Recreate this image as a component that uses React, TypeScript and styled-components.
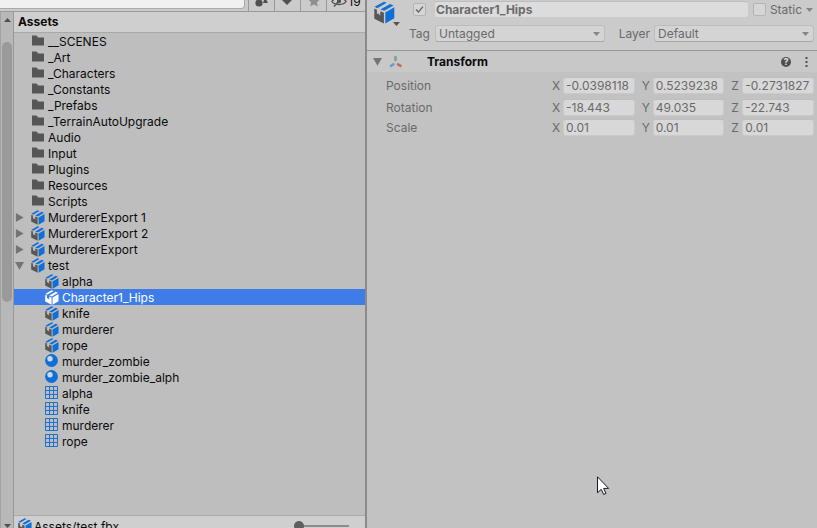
import React from "react";
import styled, { createGlobalStyle, css } from "styled-components";

const GlobalStyle = createGlobalStyle`
  *, *::before, *::after { box-sizing: border-box; }
  body {
    margin: 0;
    overflow: hidden;
    background: #c2c2c2;
    color: #0a0a0a;
    font: 12px/16px Inter, sans-serif;
  }
  button, input, select { font: inherit; color: inherit; margin: 0; }
  button { border: 0; padding: 0; background: none; }
  svg { display: block; flex: none; }
`;

/* ---------- icons ---------- */

const FolderIcon = () => (
  <svg width="14" height="14" viewBox="0 0 14 14" aria-hidden="true">
    <path d="M1 1.500h4.600l1.400 2h6v8H1z" fill="#565656" />
  </svg>
);

const PrefabIcon = ({ large, plain }: { large?: boolean; plain?: boolean }) => {
  const blue = plain ? "#fff" : "#0f6fd8";
  const dark = plain ? "#fff" : "#565656";
  return (
    <svg width={large ? 21 : 14} height={large ? 23 : 15} viewBox="0 0 21 22.500" aria-hidden="true">
      <path d="M.6 5.600 10 .4l2.700 1L3.200 7zM6.400 8.200 16 2.700l3.500 1.500L10.300 9.600z" fill={blue} />
      <path d="M11.300 11.200 20.300 6v11L11.300 22.200z" fill={blue} />
      <path d="M.3 7.200l2.600 1.200v4.400l1.500-.6 1.900 2.400V9.900l3.600 1.500v10.800L.3 17.400z" fill={dark} />
    </svg>
  );
};

const MaterialIcon = () => (
  <svg width="14" height="14" viewBox="0 0 14 14" aria-hidden="true">
    <circle cx="6.5" cy="6.5" r="6.4" fill="#0f6fd8" />
    <circle cx="5" cy="4.8" r="2.7" fill="#d3d8de" />
  </svg>
);

const MeshIcon = () => (
  <svg width="14" height="14" viewBox="0 0 14 14" aria-hidden="true">
    <path
      d="M.5.5h12v12H.5zM4.5.5v12M8.5.5v12M.5 4.5h12M.5 8.5h12"
      fill="none"
      stroke="#1c70d0"
    />
  </svg>
);

const Arrow = ({ open }: { open?: boolean }) => (
  <svg width="9" height="9" viewBox="0 0 10 10" aria-hidden="true">
    <path d={open ? "M0 1h10L5 9.6z" : "M1 0v10l8.6-5z"} fill="#747474" />
  </svg>
);

const Caret = ({ color = "#858585", up }: { color?: string; up?: boolean }) => (
  <svg width="7" height="4" viewBox="0 0 7 4" aria-hidden="true">
    <path d={up ? "M0 4h7L3.500 0z" : "M0 0h7L3.500 4z"} fill={color} />
  </svg>
);

const AxesIcon = () => (
  <svg width="14" height="14" viewBox="0 0 14 14" aria-hidden="true">
    <g strokeWidth="2.6" strokeLinecap="round">
      <path d="M6.500 2v3" stroke="#7ba779" />
      <path d="M4.400 9.400 2 10.800" stroke="#6a9dd2" />
      <path d="M9 9.400 11.500 10.800" stroke="#cb6464" />
    </g>
  </svg>
);

/* ---------- frame ---------- */

const Editor = styled.div`
  display: flex;
  height: 100vh;
  overflow: hidden;
`;

const ProjectPanel = styled.section`
  display: flex;
  flex-direction: column;
  flex: 0 0 367px;
  border-right: 2px solid #8a8a8a;
  background: #bebebe;
`;

const ToolbarClip = styled.div`
  display: flex;
  align-items: flex-end;
  flex: 0 0 12px;
  overflow: hidden;
  border-bottom: 1px solid #999;
  background: #cbcbcb;
`;

const SearchBox = styled.input`
  flex: 1;
  min-width: 0;
  height: 18px;
  margin: 0 3px 2px 0;
  border: 1px solid #aaa;
  border-left: 0;
  border-radius: 0 0 4px 0;
  background: #f0f0f0;
`;

const ToolButton = styled.button<{ $wide?: boolean }>`
  display: flex;
  align-items: center;
  justify-content: center;
  gap: 1px;
  width: ${(p) => (p.$wide ? 39 : 26)}px;
  height: 20px;
  border-left: 1px solid #999;
`;

const PanelBody = styled.div`
  display: flex;
  flex: 1;
  min-height: 0;
`;

const ScrollTrack = styled.div`
  display: flex;
  flex-direction: column;
  align-items: center;
  flex: 0 0 14px;
  padding-top: 6px;
  overflow: hidden;
  border-left: 1px solid #a3a3a3;
  border-right: 1px solid #999;
  background: #b8b8b8;
`;

const ScrollThumb = styled.div`
  flex: 0 1 260px;
  width: 10px;
  margin: 20px 0 auto;
  border-radius: 5px;
  background: #9a9a9a;
`;

const ListColumn = styled.div`
  display: flex;
  flex-direction: column;
  flex: 1;
  min-width: 0;
`;

const ListHeader = styled.h2`
  margin: 0;
  padding: 2px 4px;
  border-bottom: 1px solid #a9a9a9;
  background: #cfcfcf;
  font-size: 12px;
  line-height: 16px;
  font-weight: 700;
`;

const Tree = styled.ul`
  flex: 1;
  min-height: 0;
  margin: 0;
  padding: 0;
  overflow: hidden;
  list-style: none;
`;

const TreeRow = styled.li<{ $nested?: boolean; $selected?: boolean }>`
  display: flex;
  align-items: center;
  gap: 3px;
  height: 16px;
  padding-left: ${(p) => (p.$nested ? 15 : 1)}px;
  white-space: nowrap;
  ${(p) =>
    p.$selected &&
    css`
      background: #3e7de7;
      color: #fff;
    `}
`;

const Toggle = styled.button`
  display: flex;
  width: 13px;
`;

const RowText = styled.span`
  padding-top: 1px;
  line-height: 15px;
`;

const StatusBar = styled.footer`
  display: flex;
  align-items: flex-start;
  flex: 0 0 13px;
  gap: 2px;
  overflow: hidden;
  padding: 2px 16px 0 4px;
  border-top: 1px solid #a9a9a9;
  background: #cfcfcf;
`;

const ZoomSlider = styled.input`
  appearance: none;
  width: 55px;
  height: 15px;
  margin-left: auto;
  background: linear-gradient(#8c8c8c, #8c8c8c) center / 100% 2px no-repeat;
  &::-webkit-slider-thumb {
    appearance: none;
    width: 10px;
    height: 10px;
    border-radius: 50%;
    background: #5f5f5f;
  }
`;

/* ---------- inspector ---------- */

const Inspector = styled.section`
  flex: 1;
  min-width: 0;
  background: #c2c2c2;
  color: #6a6a6a;
`;

const ObjectHeader = styled.header`
  display: flex;
  height: 51px;
  padding: 1px 3px 0 7px;
  border-bottom: 1px solid #979797;
  background: #cbcbcb;
`;

const ObjectIcon = styled.button`
  display: flex;
  align-items: flex-end;
  width: 27px;
  height: 25px;
  svg:first-child { align-self: flex-start; }
  svg:last-child { margin-left: -2px; }
`;

const ObjectFields = styled.div`
  flex: 1;
  min-width: 0;
  display: flex;
  flex-direction: column;
  gap: 7px;
`;

const NameLine = styled.div`
  display: flex;
  align-items: center;
  gap: 4px;
  height: 17px;
  padding: 0 1px 0 12px;
`;

const Check = styled.input`
  appearance: none;
  flex: none;
  width: 13px;
  height: 13px;
  border: 1px solid #b4b4b4;
  border-radius: 2px;
  background: #d6d6d6;
  &:checked {
    background: #d6d6d6
      url("data:image/svg+xml,%3Csvg xmlns='http://www.w3.org/2000/svg' viewBox='0 0 11 11'%3E%3Cpath d='M2 5.6 4.4 8 9 2.6' fill='none' stroke='%23666' stroke-width='1.4'/%3E%3C/svg%3E");
  }
`;

const Field = styled.input`
  width: 100%;
  min-width: 0;
  height: 17px;
  padding: 0 2px;
  border: 1px solid #cacaca;
  border-top-color: #bebebe;
  border-radius: 3px;
  background: #d8d8d8;
  line-height: 15px;
  outline: 0;
`;

const NameField = styled(Field)`
  flex: 1;
  margin-left: 4px;
  padding: 0 1px;
  background: #dcdcdc;
  font-weight: 700;
`;

const StaticButton = styled.button`
  display: flex;
`;

const TagLine = styled.div`
  display: grid;
  grid-template-columns: 26px minmax(0, 17fr) 49px minmax(0, 16fr);
  align-items: center;
  padding-left: 8px;
`;

const FieldLabel = styled.label<{ $end?: boolean }>`
  padding-top: 1px;
  line-height: 16px;
  white-space: nowrap;
  justify-self: ${(p) => (p.$end ? "end" : "start")};
  padding-right: ${(p) => (p.$end ? 4 : 0)}px;
`;

const SelectBox = styled.span`
  display: grid;
  align-items: center;
  svg { grid-area: 1 / 1; justify-self: end; margin-right: 5px; pointer-events: none; }
`;

const Select = styled.select`
  appearance: none;
  grid-area: 1 / 1;
  width: 100%;
  height: 17px;
  padding: 0 3px;
  border: 1px solid #bdbdbd;
  border-bottom-color: #a8a8a8;
  border-radius: 3px;
  background: #d4d4d4;
  line-height: 15px;
`;

const ComponentHeader = styled.div`
  display: flex;
  align-items: center;
  height: 21px;
  padding: 0 1px 0 6px;
  background: #c8c8c8;
`;

const ComponentToggle = styled(Toggle)`
  width: 16px;
`;

const ComponentTitle = styled.h3`
  flex: 1;
  margin: 0 0 0 24px;
  color: #0a0a0a;
  font-size: 12px;
  line-height: 16px;
  font-weight: 700;
`;

const HeaderButton = styled.button`
  display: flex;
  justify-content: center;
  width: 20px;
`;

const HelpBadge = styled.span`
  display: flex;
  align-items: center;
  justify-content: center;
  width: 10px;
  height: 10px;
  border-radius: 50%;
  background: #4f4f4f;
  color: #d8d8d8;
  font-size: 9px;
  line-height: 10px;
  font-weight: 800;
`;

const Properties = styled.div`
  display: grid;
  padding: 5px 3px 0 19px;
`;

const VectorRow = styled.div<{ $tight?: boolean }>`
  display: grid;
  grid-template-columns: 166px minmax(0, 1fr);
  align-items: center;
  height: ${(p) => (p.$tight ? 20 : 22)}px;
  padding-bottom: ${(p) => (p.$tight ? 3 : 5)}px;
`;

const Axes = styled.div`
  display: grid;
  grid-template-columns: repeat(3, minmax(0, 1fr));
  gap: 7px;
`;

const Axis = styled.label`
  display: grid;
  grid-template-columns: 11px minmax(0, 1fr);
  align-items: center;
`;

const Pointer = styled.svg`
  position: absolute;
  left: 597px;
  top: 476px;
`;

/* ---------- content ---------- */

type Kind = "folder" | "prefab" | "material" | "mesh";
type Item = { name: string; kind: Kind; nested?: boolean; open?: boolean; toggle?: boolean; selected?: boolean };

const folders = [
  "__SCENES", "_Art", "_Characters", "_Constants", "_Prefabs", "_TerrainAutoUpgrade",
  "Audio", "Input", "Plugins", "Resources", "Scripts",
];

const items: Item[] = [
  ...folders.map((name): Item => ({ name, kind: "folder" })),
  { name: "MurdererExport 1", kind: "prefab", toggle: true },
  { name: "MurdererExport 2", kind: "prefab", toggle: true },
  { name: "MurdererExport", kind: "prefab", toggle: true },
  { name: "test", kind: "prefab", toggle: true, open: true },
  { name: "alpha", kind: "prefab", nested: true },
  { name: "Character1_Hips", kind: "prefab", nested: true, selected: true },
  { name: "knife", kind: "prefab", nested: true },
  { name: "murderer", kind: "prefab", nested: true },
  { name: "rope", kind: "prefab", nested: true },
  { name: "murder_zombie", kind: "material", nested: true },
  { name: "murder_zombie_alph", kind: "material", nested: true },
  { name: "alpha", kind: "mesh", nested: true },
  { name: "knife", kind: "mesh", nested: true },
  { name: "murderer", kind: "mesh", nested: true },
  { name: "rope", kind: "mesh", nested: true },
];

const vectors = [
  { name: "Position", values: ["-0.0398118", "0.5239238", "-0.2731827"] },
  { name: "Rotation", values: ["-18.443", "49.035", "-22.743"], tight: true },
  { name: "Scale", values: ["0.01", "0.01", "0.01"], tight: true },
];

const ItemIcon = ({ kind, selected }: { kind: Kind; selected?: boolean }) => {
  if (kind === "folder") return <FolderIcon />;
  if (kind === "material") return <MaterialIcon />;
  if (kind === "mesh") return <MeshIcon />;
  return <PrefabIcon plain={selected} />;
};

export default function App() {
  return (
    <>
      <GlobalStyle />
      <Editor>
        <ProjectPanel>
          <ToolbarClip>
            <SearchBox type="search" aria-label="Search assets" />
            <ToolButton aria-label="Search by type">
              <svg width="14" height="14" viewBox="0 0 14 14">
                <circle cx="4" cy="9" r="3.6" fill="#505050" />
                <path d="M8 1h5v4H8zM10 3l3 6H8z" fill="#505050" />
              </svg>
            </ToolButton>
            <ToolButton aria-label="Search by label">
              <svg width="14" height="14" viewBox="0 0 14 14">
                <path d="M6 0h6v5l-6 6L1 6z" fill="#505050" />
              </svg>
            </ToolButton>
            <ToolButton aria-label="Save search">
              <svg width="14" height="14" viewBox="0 0 14 14">
                <path d="M7 1l1.8 3.9 4.2.5-3.1 2.9.9 4.2L7 10.4l-3.8 2.1.9-4.2L1 5.4l4.2-.5z" fill="#8f8f8f" />
              </svg>
            </ToolButton>
            <ToolButton $wide aria-label="Hidden packages: 19">
              <svg width="16" height="14" viewBox="0 0 16 14">
                <path d="M1 7.5C3.5 3 12.5 3 15 7.5 12.5 11.5 3.5 11.5 1 7.5zM3 12.5 13 1" fill="none" stroke="#505050" strokeWidth="1.4" />
                <circle cx="8" cy="7.3" r="2" fill="#505050" />
              </svg>
              <RowText>19</RowText>
            </ToolButton>
          </ToolbarClip>
          <PanelBody>
            <ScrollTrack>
              <Caret up color="#505050" />
              <ScrollThumb />
              <Caret color="#505050" />
            </ScrollTrack>
            <ListColumn>
              <ListHeader>Assets</ListHeader>
              <Tree>
                {items.map((item, i) => (
                  <TreeRow key={i} $nested={item.nested} $selected={item.selected}>
                    <Toggle as={item.toggle ? "button" : "span"} aria-label={item.toggle ? `Toggle ${item.name}` : undefined}>
                      {item.toggle && <Arrow open={item.open} />}
                    </Toggle>
                    <ItemIcon kind={item.kind} selected={item.selected} />
                    <RowText>{item.name}</RowText>
                  </TreeRow>
                ))}
              </Tree>
              <StatusBar>
                <PrefabIcon />
                <RowText>Assets/test.fbx</RowText>
                <ZoomSlider type="range" min={0} max={100} defaultValue={0} aria-label="Icon size" />
              </StatusBar>
            </ListColumn>
          </PanelBody>
        </ProjectPanel>

        <Inspector>
          <ObjectHeader>
            <ObjectIcon aria-label="Object icon">
              <PrefabIcon large />
              <Caret color="#57534a" />
            </ObjectIcon>
            <ObjectFields>
              <NameLine>
                <Check type="checkbox" defaultChecked aria-label="Active" />
                <NameField aria-label="Name" defaultValue="Character1_Hips" />
                <Check type="checkbox" id="static" />
                <label htmlFor="static">Static</label>
                <StaticButton aria-label="Static options">
                  <Caret />
                </StaticButton>
              </NameLine>
              <TagLine>
                <FieldLabel htmlFor="tag">Tag</FieldLabel>
                <SelectBox>
                  <Select id="tag"><option>Untagged</option></Select>
                  <Caret />
                </SelectBox>
                <FieldLabel htmlFor="layer" $end>Layer</FieldLabel>
                <SelectBox>
                  <Select id="layer"><option>Default</option></Select>
                  <Caret />
                </SelectBox>
              </TagLine>
            </ObjectFields>
          </ObjectHeader>
          <ComponentHeader>
            <ComponentToggle aria-label="Toggle Transform"><Arrow open /></ComponentToggle>
            <AxesIcon />
            <ComponentTitle>Transform</ComponentTitle>
            <HeaderButton aria-label="Help"><HelpBadge>?</HelpBadge></HeaderButton>
            <HeaderButton aria-label="More">
              <svg width="3" height="12" viewBox="0 0 3 12">
                <path d="M.5 1h2v2h-2zM.5 5h2v2h-2zM.5 9h2v2h-2z" fill="#505050" />
              </svg>
            </HeaderButton>
          </ComponentHeader>
          <Properties>
            {vectors.map((v) => (
              <VectorRow key={v.name} $tight={v.tight}>
                <span>{v.name}</span>
                <Axes>
                  {["X", "Y", "Z"].map((axis, i) => (
                    <Axis key={axis}>
                      {axis}
                      <Field aria-label={`${v.name} ${axis}`} defaultValue={v.values[i]} />
                    </Axis>
                  ))}
                </Axes>
              </VectorRow>
            ))}
          </Properties>
        </Inspector>
      </Editor>
      <Pointer width="13" height="20" viewBox="0 0 13 20" aria-hidden="true">
        <path d="M.5.8v16l3.700-3.500 2.500 5.200 2.300-1.100-2.400-5h5z" fill="#fff" stroke="#1c1826" />
      </Pointer>
    </>
  );
}
